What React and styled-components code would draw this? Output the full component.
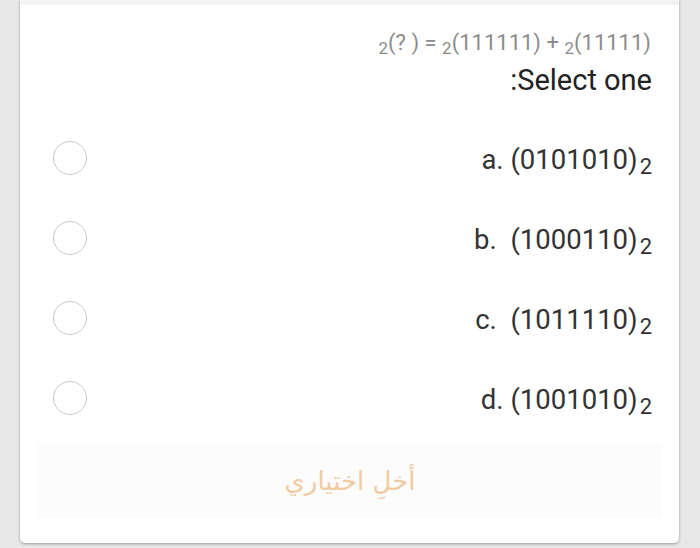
import React from 'react';
import styled, { createGlobalStyle } from 'styled-components';

const GlobalStyle = createGlobalStyle`
    html, body {
        margin: 0;
        padding: 0;
        background: #e8e8e8;
        font-family: Roboto, "Liberation Sans", sans-serif;
    }
`;

const options = [
    { letter: 'a.', value: '(0101010)' },
    { letter: 'b.', value: ' (1000110)' },
    { letter: 'c.', value: ' (1011110)' },
    { letter: 'd.', value: '(1001010)' },
];

const App = () => {
    return (
        <>
            <GlobalStyle />
            <StyledPage>
                <StyledCard>
                    <StyledTopStrip />
                    <StyledQuestion>
                        <sub>2</sub>(? ) = <sub>2</sub>(111111) + <sub>2</sub>(11111)
                    </StyledQuestion>
                    <StyledPrompt>:Select one</StyledPrompt>
                    <StyledOptions>
                        {options.map((o) => (
                            <StyledRow key={o.letter}>
                                <StyledRadio />
                                <StyledAnswer>
                                    {o.letter} {o.value}<sub>2</sub>
                                </StyledAnswer>
                            </StyledRow>
                        ))}
                    </StyledOptions>
                    <StyledClear dir="rtl">أخلِ اختياري</StyledClear>
                </StyledCard>
            </StyledPage>
        </>
    );
};

export default App;

const StyledPage = styled.div`
    width: 700px;
    height: 548px;
    padding: 0 21px 0 20px;
    box-sizing: border-box;
`;
const StyledCard = styled.div`
    background: #ffffff;
    height: 543px;
    border-radius: 0 0 5px 5px;
    box-shadow: 0 1px 3px rgba(0, 0, 0, 0.35);
    display: flex;
    flex-direction: column;
    padding: 0 17px 25px 18px;
    box-sizing: border-box;
`;
const StyledTopStrip = styled.div`
    height: 5px;
    flex-shrink: 0;
    margin: 0 -17px 0 -18px;
    background: #f3f3f3;
`;
const StyledQuestion = styled.div`
    margin-top: 23px;
    height: 30px;
    line-height: 30px;
    font-size: 22px;
    color: #8c8c8c;
    text-align: right;
    padding-right: 11px;
    white-space: pre;
    sub {
        font-size: 17px;
        vertical-align: -4px;
        line-height: 0;
    }
`;
const StyledPrompt = styled.div`
    margin-top: 3px;
    height: 38px;
    line-height: 38px;
    font-size: 29px;
    color: #222222;
    text-align: right;
    padding-right: 10px;
`;
const StyledOptions = styled.div`
    margin-top: 19px;
    display: flex;
    flex-direction: column;
`;
const StyledRow = styled.div`
    height: 80px;
    flex-shrink: 0;
    display: flex;
    align-items: center;
    justify-content: space-between;
    padding: 0 10px 0 15px;
`;
const StyledRadio = styled.span`
    width: 32px;
    height: 32px;
    border: 1.6px solid #c9c9c9;
    border-radius: 50%;
`;
const StyledAnswer = styled.div`
    font-size: 27.5px;
    color: #333333;
    white-space: pre;
    margin-top: 3px;
    sub {
        font-size: 22px;
        vertical-align: -5px;
        line-height: 0;
        margin-left: 2px;
    }
`;
const StyledClear = styled.div`
    margin-top: 5px;
    height: 75px;
    flex-shrink: 0;
    background: #fcfcfc;
    display: flex;
    align-items: center;
    justify-content: center;
    font-family: "DejaVu Sans", "Noto Sans", sans-serif;
    font-size: 26px;
    color: #f1cba2;
`;
